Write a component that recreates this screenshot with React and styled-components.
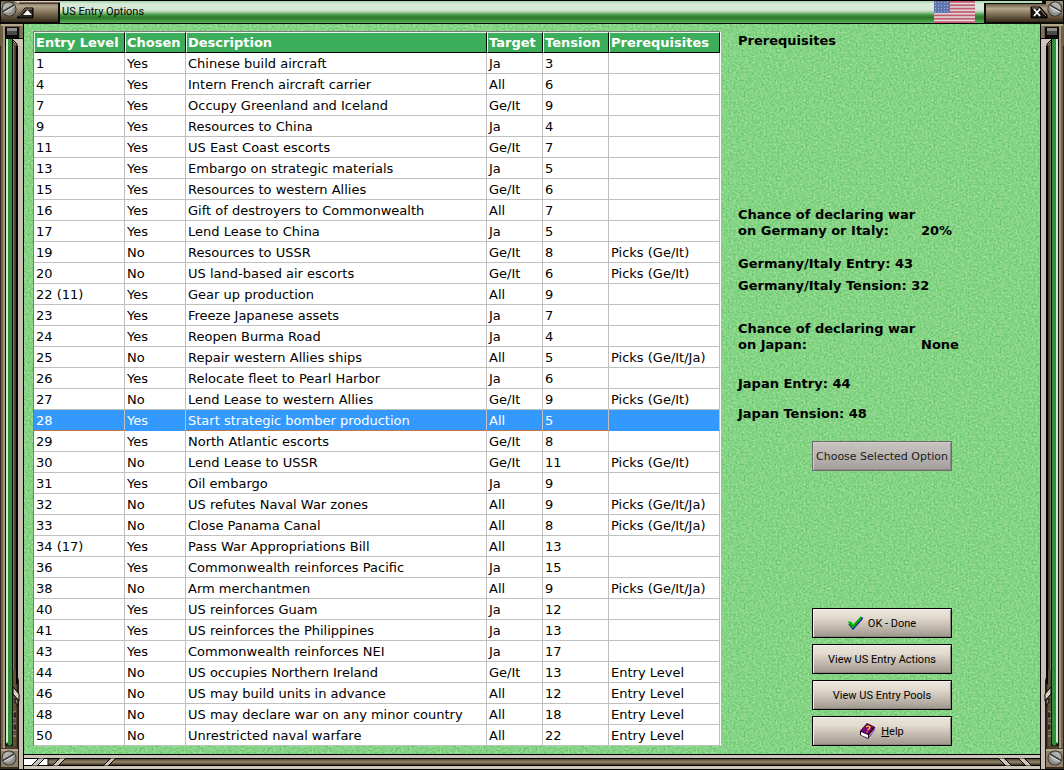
import React, { useState } from "react";
import styled, { createGlobalStyle } from "styled-components";

const columns = [
  { title: "Entry Level", width: 91 },
  { title: "Chosen", width: 61 },
  { title: "Description" },
  { title: "Target", width: 56 },
  { title: "Tension", width: 66 },
  { title: "Prerequisites", width: 111 },
];

const options = [
  ["1", "Yes", "Chinese build aircraft", "Ja", "3", ""],
  ["4", "Yes", "Intern French aircraft carrier", "All", "6", ""],
  ["7", "Yes", "Occupy Greenland and Iceland", "Ge/It", "9", ""],
  ["9", "Yes", "Resources to China", "Ja", "4", ""],
  ["11", "Yes", "US East Coast escorts", "Ge/It", "7", ""],
  ["13", "Yes", "Embargo on strategic materials", "Ja", "5", ""],
  ["15", "Yes", "Resources to western Allies", "Ge/It", "6", ""],
  ["16", "Yes", "Gift of destroyers to Commonwealth", "All", "7", ""],
  ["17", "Yes", "Lend Lease to China", "Ja", "5", ""],
  ["19", "No", "Resources to USSR", "Ge/It", "8", "Picks (Ge/It)"],
  ["20", "No", "US land-based air escorts", "Ge/It", "6", "Picks (Ge/It)"],
  ["22 (11)", "Yes", "Gear up production", "All", "9", ""],
  ["23", "Yes", "Freeze Japanese assets", "Ja", "7", ""],
  ["24", "Yes", "Reopen Burma Road", "Ja", "4", ""],
  ["25", "No", "Repair western Allies ships", "All", "5", "Picks (Ge/It/Ja)"],
  ["26", "Yes", "Relocate fleet to Pearl Harbor", "Ja", "6", ""],
  ["27", "No", "Lend Lease to western Allies", "Ge/It", "9", "Picks (Ge/It)"],
  ["28", "Yes", "Start strategic bomber production", "All", "5", ""],
  ["29", "Yes", "North Atlantic escorts", "Ge/It", "8", ""],
  ["30", "No", "Lend Lease to USSR", "Ge/It", "11", "Picks (Ge/It)"],
  ["31", "Yes", "Oil embargo", "Ja", "9", ""],
  ["32", "No", "US refutes Naval War zones", "All", "9", "Picks (Ge/It/Ja)"],
  ["33", "No", "Close Panama Canal", "All", "8", "Picks (Ge/It/Ja)"],
  ["34 (17)", "Yes", "Pass War Appropriations Bill", "All", "13", ""],
  ["36", "Yes", "Commonwealth reinforces Pacific", "Ja", "15", ""],
  ["38", "No", "Arm merchantmen", "All", "9", "Picks (Ge/It/Ja)"],
  ["40", "Yes", "US reinforces Guam", "Ja", "12", ""],
  ["41", "Yes", "US reinforces the Philippines", "Ja", "13", ""],
  ["43", "Yes", "Commonwealth reinforces NEI", "Ja", "17", ""],
  ["44", "No", "US occupies Northern Ireland", "Ge/It", "13", "Entry Level"],
  ["46", "No", "US may build units in advance", "All", "12", "Entry Level"],
  ["48", "No", "US may declare war on any minor country", "All", "18", "Entry Level"],
  ["50", "No", "Unrestricted naval warfare", "All", "22", "Entry Level"],
];

const Screw = ({ x, y, turn = 0 }) => (
  <g transform={`translate(${x} ${y}) rotate(${turn})`}>
    <circle r="7.5" fill="#2a2620" />
    <circle r="6.7" fill="#8d8d8a" />
    <circle cx="-1" cy="-1" r="5" fill="#b2b2ae" />
    <path d="M-6 2.5L5 -4" stroke="#3c3c3a" strokeWidth="1.6" />
    <path d="M-5.5 3.8L5.8 -2.8" stroke="#dededa" strokeWidth="1" />
  </g>
);

const Bronze = ({ id }) => (
  <linearGradient id={id} x1="0" y1="0" x2="0" y2="1">
    <stop offset="0" stopColor="#6b5c44" />
    <stop offset="0.25" stopColor="#b3a58b" />
    <stop offset="0.5" stopColor="#8a7a60" />
    <stop offset="1" stopColor="#35291a" />
  </linearGradient>
);

const LeftCap = () => (
  <svg width="60" height="24" viewBox="0 0 60 24" aria-hidden="true">
    <defs>
      <Bronze id="bronzeLeft" />
    </defs>
    <path d="M0 0H60V24H0Z" fill="#0c0a06" />
    <path d="M1 1H19V3H58V22H1Z" fill="url(#bronzeLeft)" />
    <path d="M14 1H60V3H18Z" fill="#e5c9b4" />
    <path d="M19 3H60" stroke="#000" />
    <path d="M17 18L25 8H33V18H17Z" fill="#2a251d" stroke="#000" />
    <path d="M19 16L25 9H32" fill="none" stroke="#8b8378" />
    <path d="M23 15L27.5 10L32 15Z" fill="#fff" />
    <Screw x={9} y={9} />
  </svg>
);

const RightCap = () => (
  <svg width="80" height="24" viewBox="0 0 80 24" aria-hidden="true">
    <defs>
      <Bronze id="bronzeRight" />
    </defs>
    <path d="M0 0H80V24H0Z" fill="#0c0a06" />
    <path d="M0 1H58V3H0Z" fill="#b4dcb4" />
    <path d="M2 4H79V22H2Z" fill="url(#bronzeRight)" />
    <path d="M62 1H79V5H62Z" fill="#9c8c74" />
    <path d="M47 7H56L63 15V18H47Z" fill="#16120c" stroke="#000" />
    <path d="M48 8H55L62 16" fill="none" stroke="#8b8378" />
    <path d="M50 9L56 16M56 9L50 16" stroke="#fff" strokeWidth="1.8" />
    <Screw x={71} y={9} turn={60} />
  </svg>
);

const RailTop = () => (
  <svg width="24" height="22" viewBox="0 0 24 22" aria-hidden="true">
    <path d="M0 0H24V22H0Z" fill="#6a5b43" />
    <path d="M1 0H24V2H1Z" fill="#b5a78d" />
    <path d="M1 2H3V22H1Z" fill="#6f6049" />
    <path d="M3 2H5V22H3Z" fill="#a3947a" />
    <path d="M20 2H23V14H20Z" fill="#80715a" />
    <path d="M5 3H19V14H5Z" fill="#0a0a0a" />
    <path d="M7 4H17V7H7Z" fill="#8d8d8a" />
    <path d="M7 7H17V11H7Z" fill="#4c4b48" />
    <path d="M5 14H24V15H5Z" fill="#000" />
    <path d="M5 15H6V22H5ZM12 15H13V22H12Z" fill="#000" />
    <path d="M6 15H8V22H6Z" fill="#d2ead2" />
    <path d="M8 15H12V22H8Z" fill="#2f8f3a" />
    <path d="M13 15H23V22H18L13 17Z" fill="#d0c7ba" />
    <path d="M13 16L17 20V22" fill="none" stroke="#000" />
    <path d="M23 0H24V22H23Z" fill="#000" />
  </svg>
);

const RailBottom = () => (
  <svg width="24" height="100" viewBox="0 0 24 100" aria-hidden="true">
    <path d="M0 0H24V100H0Z" fill="#4a3f2e" />
    <path d="M0 0H1V100H0Z" fill="#2e261a" />
    <path d="M1 0H3V78H1Z" fill="#6f6049" />
    <path d="M3 0H5V78H3Z" fill="#a3947a" />
    <path d="M5 0H13V76H5Z" fill="#14160f" />
    <path d="M6 0H8V73H6Z" fill="#d2ead2" />
    <path d="M8 0H12V74L10 76L7 74V72H8Z" fill="#2f8f3a" />
    <path d="M13 0H16V76H13Z" fill="#5e513c" />
    <path d="M16 0H18V14H16Z" fill="#000" />
    <path d="M18 0H23V100H19V10H18Z" fill="#c9c0b3" />
    <path d="M18 8V100" stroke="#000" />
    <path d="M13 17L19 24V31L13 24Z" fill="#d5cdc2" stroke="#000" />
    <path d="M15 29H18V36L15 32Z" fill="#8d7f66" stroke="#000" />
    <path d="M13 42H16M13 48H16M13 54H16M13 60H16M13 66H16" stroke="#b5a78d" />
    <path d="M15 42V48M15 54V60" stroke="#000" />
    <path d="M1 79H18V99H1Z" fill="#8f8069" />
    <path d="M1 79H18V81H1Z" fill="#b5a78d" />
    <path d="M1 97H18V99H1Z" fill="#3a2f20" />
    <path d="M23 0H24V100H23Z" fill="#000" />
    <path d="M0 99H24V100H0Z" fill="#000" />
    <Screw x={9} y={88} />
  </svg>
);

const Slashes = () => (
  <svg width="92" height="8" viewBox="0 0 92 8" aria-hidden="true">
    <path d="M0 1H24V7H0Z" fill="#fff" />
    <path d="M7 8L15 0H21L13 8Z" fill="#c9c0b3" stroke="#000" />
    <path d="M24 0V8" stroke="#000" />
    <path d="M28 8L36 0H42L34 8Z" fill="#d0c7ba" stroke="#000" />
    <path d="M79 8L87 0H92L84 8Z" fill="#d0c7ba" stroke="#000" />
  </svg>
);

const SlashesBack = () => (
  <svg width="42" height="8" viewBox="0 0 42 8" aria-hidden="true">
    <path d="M0 0H6L14 8H8Z" fill="#d0c7ba" stroke="#000" />
    <path d="M20 0H26L34 8H28Z" fill="#d0c7ba" stroke="#000" />
  </svg>
);

const Flag = () => (
  <svg width="41" height="22" viewBox="0 0 41 22" role="img" aria-label="United States">
    <path d="M0 0H41V22H0Z" fill="#dfd6da" />
    {[0, 2, 4, 6, 8, 10, 12].map((n) => (
      <rect key={n} y={(n * 22) / 13} width="41" height={22 / 13} fill="#c4596f" />
    ))}
    <path d="M0 0H16V12H0Z" fill="#5f74ac" />
    {[2, 5, 8, 11].map((y) => (
      <path key={y} d={`M1 ${y - 0.5}H16`} stroke="#a3b2d8" strokeDasharray="1 2" />
    ))}
  </svg>
);

const CheckIcon = () => (
  <svg width="15" height="14" viewBox="0 0 15 14" aria-hidden="true">
    <path d="M1 8L5 13L14 3V1" fill="none" stroke="#1020b0" strokeWidth="1.5" />
    <path d="M0 6L3 6L5 9L13 0V3L5 12.5L3 11Z" fill="#00a800" />
    <path d="M0 6H3L5 8.5" fill="none" stroke="#00e000" />
  </svg>
);

const BookIcon = () => (
  <svg width="16" height="16" viewBox="0 0 16 16" aria-hidden="true">
    <path d="M0 8L7 0L15 4V7L8 16L0 12Z" fill="#1a001a" />
    <path d="M1 8L7 1L14 4L8 11Z" fill="#800080" />
    <path d="M1 9L8 12V15L1 12Z" fill="#fff" />
    <path d="M9 12L15 5V7L9 14Z" fill="#b98ac0" />
    <path d="M6 4L8 3L10 4L9 6L7.5 7M7 8.5V9.5" fill="none" stroke="#ffe000" strokeWidth="1.3" />
  </svg>
);

const App = () => {
  const [selected, setSelected] = useState("28");

  return (
    <Window>
      <GlobalStyle />
      <TitleBar>
        <LeftCap />
        <Title>US Entry Options</Title>
        <Flag />
        <RightCap />
      </TitleBar>
      <Middle>
        <Rail>
          <RailTop />
          <RailStripes />
          <RailBottom />
        </Rail>
        <Center>
          <Content>
            <TableFrame>
              <Table>
                <colgroup>
                  {columns.map((col) => (
                    <Col key={col.title} $width={col.width} />
                  ))}
                </colgroup>
                <thead>
                  <tr>
                    {columns.map((col) => (
                      <HeadCell key={col.title} scope="col">
                        {col.title}
                      </HeadCell>
                    ))}
                  </tr>
                </thead>
                <tbody>
                  {options.map((option) => (
                    <Row
                      key={option[0]}
                      $selected={option[0] === selected}
                      aria-selected={option[0] === selected}
                      onClick={() => setSelected(option[0])}
                    >
                      {option.map((text, i) => (
                        <Cell key={columns[i].title} $selected={option[0] === selected}>
                          {text}
                        </Cell>
                      ))}
                    </Row>
                  ))}
                </tbody>
              </Table>
            </TableFrame>
            <Panel>
              <Prerequisites>Prerequisites</Prerequisites>
              <Stats>
                <Chance>
                  <ChanceLabel>
                    Chance of declaring war
                    <br />
                    on Germany or Italy:
                  </ChanceLabel>
                  <span>20%</span>
                </Chance>
                <Stat $gap={17}>Germany/Italy Entry: 43</Stat>
                <Stat $gap={6}>Germany/Italy Tension: 32</Stat>
                <Chance $gap={27}>
                  <ChanceLabel>
                    Chance of declaring war
                    <br />
                    on Japan:
                  </ChanceLabel>
                  <span>None</span>
                </Chance>
                <Stat $gap={23}>Japan Entry: 44</Stat>
                <Stat $gap={14}>Japan Tension: 48</Stat>
              </Stats>
              <ChooseButton disabled>Choose Selected Option</ChooseButton>
              <Actions>
                <Button>
                  <CheckIcon />
                  OK - Done
                </Button>
                <Button>View US Entry Actions</Button>
                <Button>View US Entry Pools</Button>
                <Button>
                  <BookIcon />
                  <span>
                    <u>H</u>elp
                  </span>
                </Button>
              </Actions>
            </Panel>
          </Content>
          <BottomBar>
            <Slashes />
            <SlashesBack />
          </BottomBar>
        </Center>
        <Rail $mirrored>
          <RailTop />
          <RailStripes />
          <RailBottom />
        </Rail>
      </Middle>
    </Window>
  );
};

export default App;

const grain = `<svg xmlns="http://www.w3.org/2000/svg" width="128" height="128"><filter id="n" x="0" y="0" width="100%" height="100%" color-interpolation-filters="sRGB"><feTurbulence type="fractalNoise" baseFrequency="0.5" numOctaves="2" seed="4" stitchTiles="stitch"/><feColorMatrix values="0.44 0 0 0 0.3 0.18 0 0 0 0.74 0.4 0 0 0 0.32 0 0 0 0 1"/></filter><rect width="128" height="128" filter="url(#n)"/></svg>`;

const GlobalStyle = createGlobalStyle`
  * {
    box-sizing: border-box;
  }

  body {
    margin: 0;
    color: #000;
    font-family: "DejaVu Sans", Verdana, sans-serif;
    font-size: 13px;
  }

  svg {
    display: block;
    flex: none;
  }
`;

const Window = styled.div`
  display: flex;
  flex-direction: column;
  min-height: 100vh;
`;

const TitleBar = styled.header`
  display: flex;
  align-items: center;
  height: 24px;
  border-top: 1px solid #000;
  border-bottom: 1px solid #000;
  background: linear-gradient(
    #a4d4a4,
    #d8ead8 3px,
    #d4e6d4 9px,
    #a6cfa6 11px,
    #3f963f 14px,
    #2c742c 17px,
    #46a046 20px,
    #58b458
  );

  svg:last-child {
    margin-left: 9px;
  }
`;

const Title = styled.h1`
  flex: 1;
  margin: 0;
  padding-left: 2px;
  font-family: Roboto, "Liberation Sans", sans-serif;
  font-size: 11px;
  font-weight: normal;
  line-height: 22px;
`;

const Middle = styled.div`
  display: flex;
  flex: 1;
`;

const Rail = styled.div`
  display: flex;
  flex: none;
  flex-direction: column;
  width: 24px;
  transform: ${({ $mirrored }) => ($mirrored ? "scaleX(-1)" : "none")};
`;

const RailStripes = styled.div`
  flex: 1;
  background: linear-gradient(
    to right,
    #2e261a 1px,
    #6f6049 1px 3px,
    #a3947a 3px 5px,
    #14160f 5px 6px,
    #d2ead2 6px 8px,
    #2f8f3a 8px 12px,
    #000 12px 13px,
    #8a7a60 13px 14px,
    #4a3f2e 14px 16px,
    #000 16px 18px,
    #c9c0b3 18px 23px,
    #000 23px
  );
`;

const Center = styled.div`
  display: flex;
  flex: 1;
  flex-direction: column;
  min-width: 0;
`;

const Content = styled.main`
  display: flex;
  flex: 1;
  align-items: stretch;
  padding: 7px 0 8px 9px;
  background: #80d083 url('data:image/svg+xml,${encodeURIComponent(grain)}');
`;

const TableFrame = styled.div`
  flex: 1;
  min-width: 0;
  border: 1px solid #fff;
  border-top-color: #7c7c7c;
  border-bottom: none;
  border-left-color: #7c7c7c;
  background: #fff;
`;

const Table = styled.table`
  width: 100%;
  table-layout: fixed;
  border-collapse: separate;
  border-spacing: 0;
`;

const Col = styled.col`
  width: ${({ $width }) => ($width ? `${$width}px` : "auto")};
`;

const HeadCell = styled.th`
  height: 21px;
  padding: 0 0 0 1px;
  border: 1px solid #000;
  border-top-color: #e8f4ea;
  border-left-color: #e8f4ea;
  background: #3cae5b;
  color: #fff;
  font-weight: bold;
  line-height: 19px;
  text-align: left;
  white-space: nowrap;
`;

const Cell = styled.td`
  height: 21px;
  padding: 2px 0 0 2px;
  border-right: 1px solid #c0c0c0;
  border-bottom: ${({ $selected }) => ($selected ? "1px dotted #c8743a" : "1px solid #c0c0c0")};
  line-height: 18px;
  white-space: nowrap;
`;

const Row = styled.tr`
  background: ${({ $selected }) => ($selected ? "#3399ff" : "#fff")};
  color: ${({ $selected }) => ($selected ? "#fff" : "#000")};
  cursor: default;
`;

const Panel = styled.aside`
  display: flex;
  flex: none;
  flex-direction: column;
  width: 319px;
  padding-left: 17px;
  font-weight: bold;
  line-height: 16px;
`;

const Prerequisites = styled.h2`
  height: 176px;
  margin: 0;
  padding-top: 2px;
  font-size: 13px;
`;

const Stats = styled.div`
  margin-bottom: 19px;
`;

const Stat = styled.p`
  margin: ${({ $gap }) => $gap}px 0 0;
`;

const Chance = styled.div`
  display: flex;
  align-items: flex-end;
  margin-top: ${({ $gap = 0 }) => $gap}px;
`;

const ChanceLabel = styled.span`
  width: 183px;
  white-space: nowrap;
`;

const Button = styled.button`
  display: flex;
  align-items: center;
  justify-content: center;
  gap: 5px;
  width: 140px;
  height: 30px;
  padding: 0;
  border: 1px solid #000;
  background: linear-gradient(#ece6dc, #e2dacf 30%, #c6beb3 60%, #9f978d);
  box-shadow: inset 1px 1px #f4efe8, inset -1px -1px #8c847a;
  color: #000;
  font-family: Roboto, "Liberation Sans", sans-serif;
  font-size: 11px;
  white-space: nowrap;
`;

const ChooseButton = styled(Button)`
  margin-left: 74px;
  border-color: #6c6c6c;
  background: linear-gradient(#c8c4c0, #b8b4b1 50%, #a19d9b);
  box-shadow: inset 1px 1px #d0ccc8, inset -1px -1px #8f8b89;
  color: #1c1c1c;
  font-family: "DejaVu Sans", Verdana, sans-serif;
`;

const Actions = styled.div`
  display: flex;
  flex-direction: column;
  gap: 6px;
  margin: auto 0 0 74px;
`;

const BottomBar = styled.footer`
  display: flex;
  align-items: center;
  justify-content: space-between;
  height: 16px;
  background: linear-gradient(
    #000 1px,
    #cfc6b9 1px 4px,
    #000 4px 5px,
    #54472f 5px,
    #94866c 8px,
    #40331f 11px,
    #000 11px 12px,
    #cfc6b9 12px 15px,
    #000 15px
  );
`;
